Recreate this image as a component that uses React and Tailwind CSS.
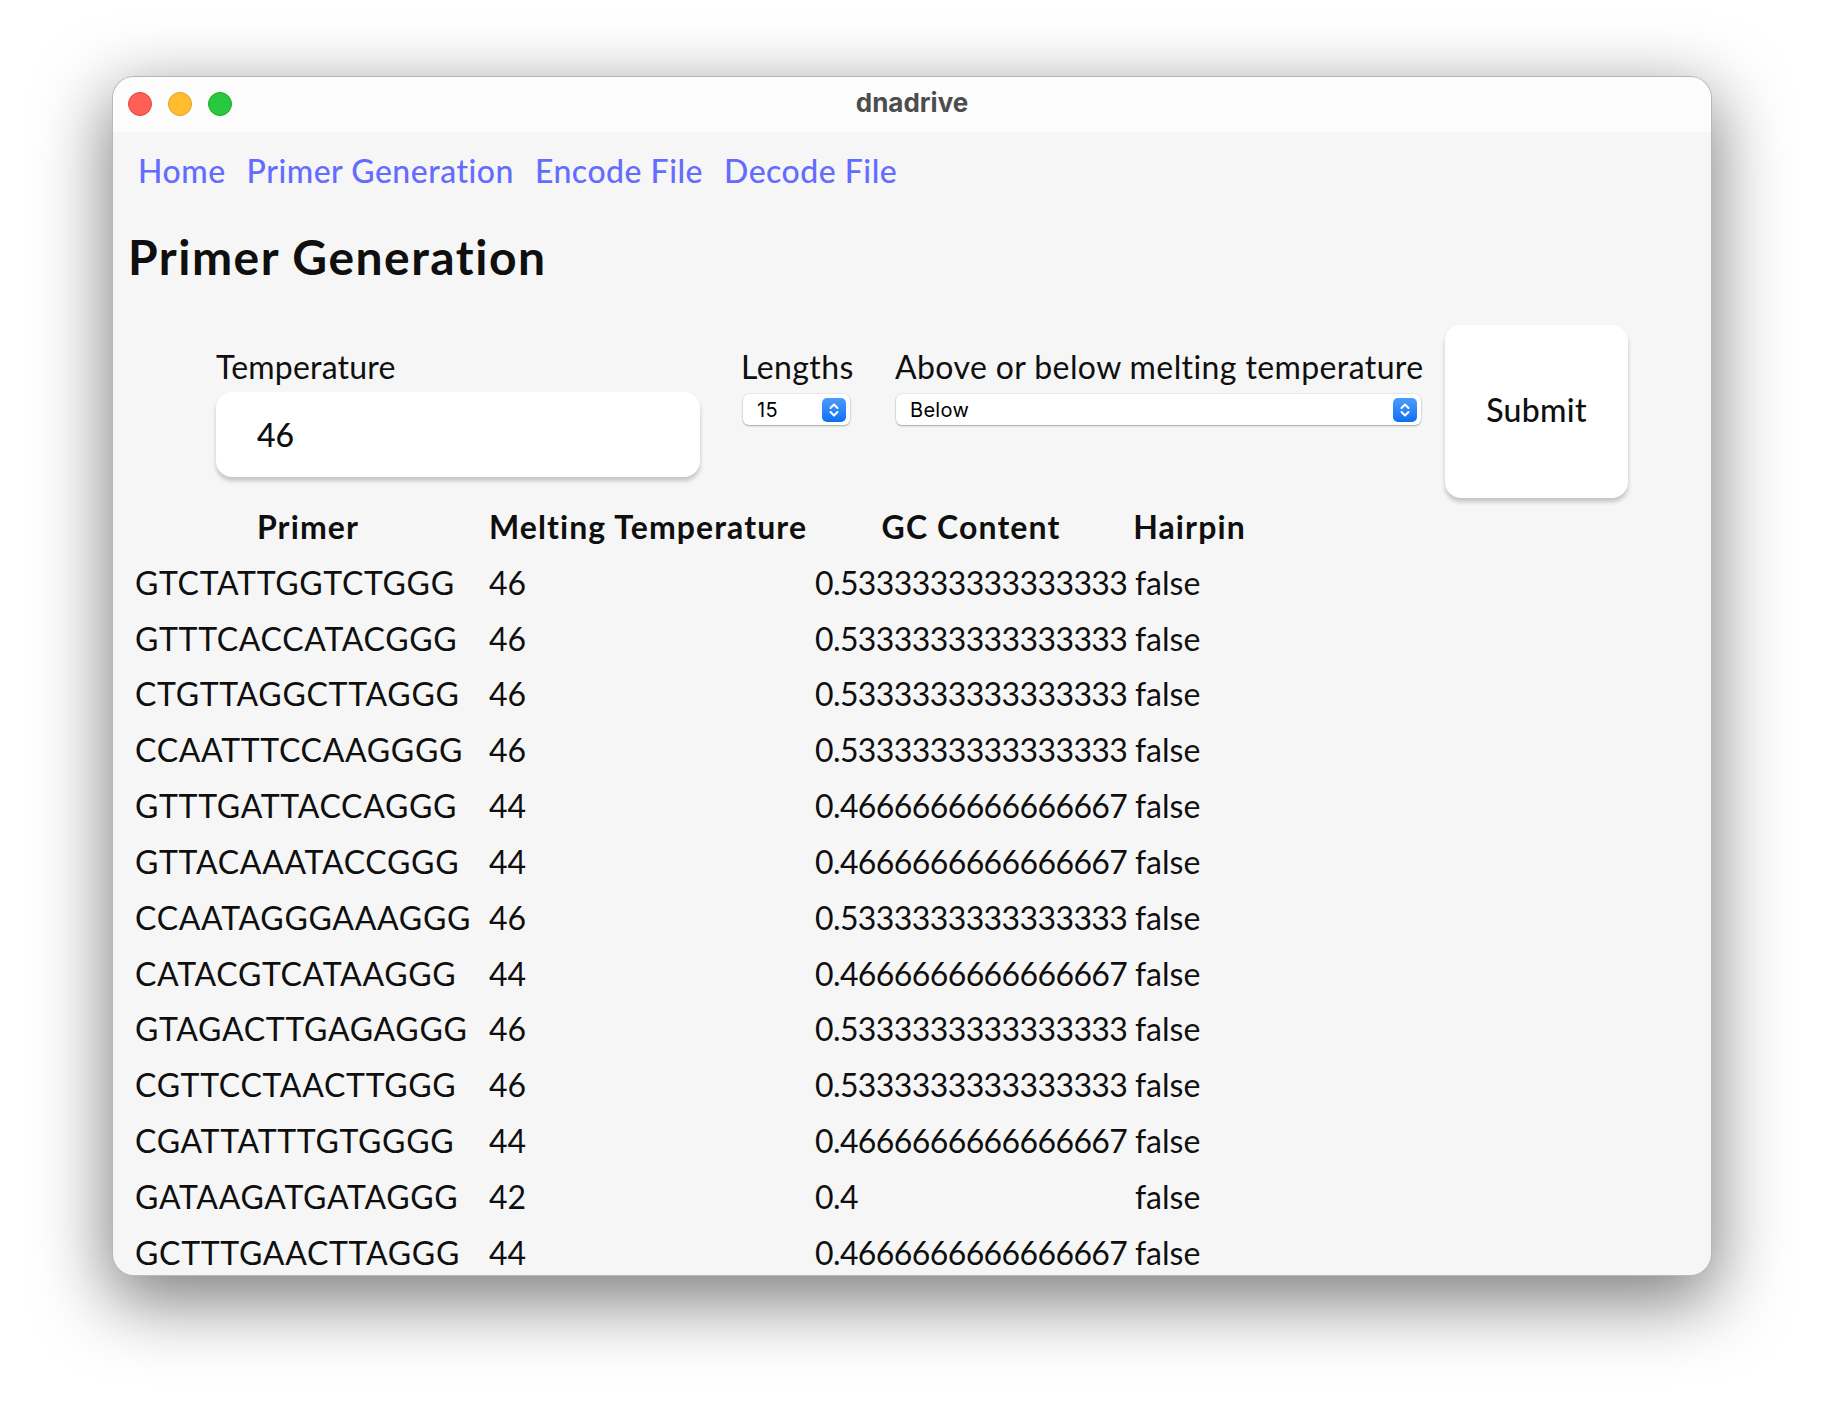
import React from "react";

const rows = [
  ["GTCTATTGGTCTGGG", "46", "0.5333333333333333", "false"],
  ["GTTTCACCATACGGG", "46", "0.5333333333333333", "false"],
  ["CTGTTAGGCTTAGGG", "46", "0.5333333333333333", "false"],
  ["CCAATTTCCAAGGGG", "46", "0.5333333333333333", "false"],
  ["GTTTGATTACCAGGG", "44", "0.4666666666666667", "false"],
  ["GTTACAAATACCGGG", "44", "0.4666666666666667", "false"],
  ["CCAATAGGGAAAGGG", "46", "0.5333333333333333", "false"],
  ["CATACGTCATAAGGG", "44", "0.4666666666666667", "false"],
  ["GTAGACTTGAGAGGG", "46", "0.5333333333333333", "false"],
  ["CGTTCCTAACTTGGG", "46", "0.5333333333333333", "false"],
  ["CGATTATTTGTGGGG", "44", "0.4666666666666667", "false"],
  ["GATAAGATGATAGGG", "42", "0.4", "false"],
  ["GCTTTGAACTTAGGG", "44", "0.4666666666666667", "false"],
];

// per-column letter spacing so Lato lands on the same widths as the original
const cellTracking = ["tracking-[0.7px]", "", "tracking-[-0.6px]", ""];

const Stepper = () => (
  <span className="flex h-[24px] w-[24px] items-center justify-center rounded-[5px] bg-gradient-to-b from-[#4a9bfc] to-[#0a6ff3]">
    <svg width="24" height="24" viewBox="0 0 24 24" fill="none" stroke="white" strokeWidth="2" strokeLinecap="round" strokeLinejoin="round">
      <path d="M8.5 10l3.5-3.5 3.5 3.5" />
      <path d="M8.5 14l3.5 3.5 3.5-3.5" />
    </svg>
  </span>
);

const Select = ({ value, className }) => (
  <div
    className={`flex h-[31px] items-center justify-between rounded-[6px] bg-white pl-[14px] pr-[4px] text-[20px] tracking-[0.3px] text-black [font-family:Inter,sans-serif] shadow-[0_1px_2px_rgba(0,0,0,0.3),0_0_0_0.5px_rgba(0,0,0,0.08)] ${className}`}
  >
    <span>{value}</span>
    <Stepper />
  </div>
);

const Light = ({ color }) => (
  <span className={`h-[24px] w-[24px] rounded-full border ${color}`} />
);

export default function App() {
  return (
    <div className="min-h-[1424px] w-[1824px] bg-white pl-[112px] pt-[76px] text-[#0f0f0f] [font-family:Lato,sans-serif]">
      <div className="flex h-[1200px] w-[1600px] flex-col overflow-hidden rounded-[22px] border border-black/25 bg-[#f6f6f6] shadow-[0_22px_70px_4px_rgba(0,0,0,0.5)]">
        {/* title bar */}
        <div className="grid h-[55px] shrink-0 grid-cols-[1fr_auto_1fr] items-center bg-[#fcfcfc] px-[15px] pb-[2px]">
          <div className="flex gap-[16px]">
            <Light color="bg-[#ff5f57] border-[#e0443e]" />
            <Light color="bg-[#febc2e] border-[#dea123]" />
            <Light color="bg-[#28c840] border-[#1aab29]" />
          </div>
          <div className="pb-[2px] text-[26px] font-bold text-[#4d4d4d] [font-family:Inter,sans-serif]">dnadrive</div>
          <div />
        </div>

        {/* content */}
        <div className="flex flex-col">
          <nav className="flex gap-[21px] pl-[25px] pt-[14.5px] text-[32px] font-medium leading-[48px] tracking-[0.5px] text-[#646cff]">
            <a>Home</a>
            <a>Primer Generation</a>
            <a>Encode File</a>
            <a>Decode File</a>
          </nav>

          <h1 className="mt-[34px] pl-[15px] text-[48px] font-bold leading-[56px] tracking-[1.5px]">Primer Generation</h1>

          <div className="mt-[40.5px] flex items-start pl-[103px] text-[32px] leading-[48px]">
            <div className="mt-[17.5px] flex w-[484px] flex-col">
              <label className="tracking-[0.2px]">Temperature</label>
              <div className="mt-[1.5px] flex h-[85px] items-center rounded-[16px] bg-white pl-[41px] font-medium shadow-[0_4px_4px_rgba(0,0,0,0.2)]">
                46
              </div>
            </div>
            <div className="ml-[41px] mt-[17.5px] flex w-[112px] flex-col">
              <label className="tracking-[0.4px]">Lengths</label>
              <Select value="15" className="ml-[2px] mt-[3.5px] w-[107px]" />
            </div>
            <div className="ml-[42px] mt-[17.5px] flex w-[529px] flex-col">
              <label className="whitespace-nowrap tracking-[0.4px]">Above or below melting temperature</label>
              <Select value="Below" className="ml-[1px] mt-[3.5px] w-[525px]" />
            </div>
            <button className="ml-[21px] flex h-[173px] w-[183px] items-center justify-center rounded-[16px] bg-white pb-[4px] font-medium tracking-[0.3px] shadow-[0_4px_4px_rgba(0,0,0,0.2)]">
              Submit
            </button>
          </div>

          <div className="mt-[1px] grid grid-cols-[354px_326px_320px_117px] pl-[18px] text-[32px] leading-[48px]">
            {["Primer", "Melting Temperature", "GC Content", "Hairpin"].map((h) => (
              <div key={h} className="flex h-[55.84px] items-center justify-center whitespace-nowrap font-bold tracking-[1.1px]">
                {h}
              </div>
            ))}
            {rows.map((r, i) =>
              r.map((c, j) => (
                <div key={i + "-" + j} className={`flex h-[55.84px] items-center whitespace-nowrap pl-[4px] ${cellTracking[j]}`}>
                  {c}
                </div>
              ))
            )}
          </div>
        </div>
      </div>
    </div>
  );
}
